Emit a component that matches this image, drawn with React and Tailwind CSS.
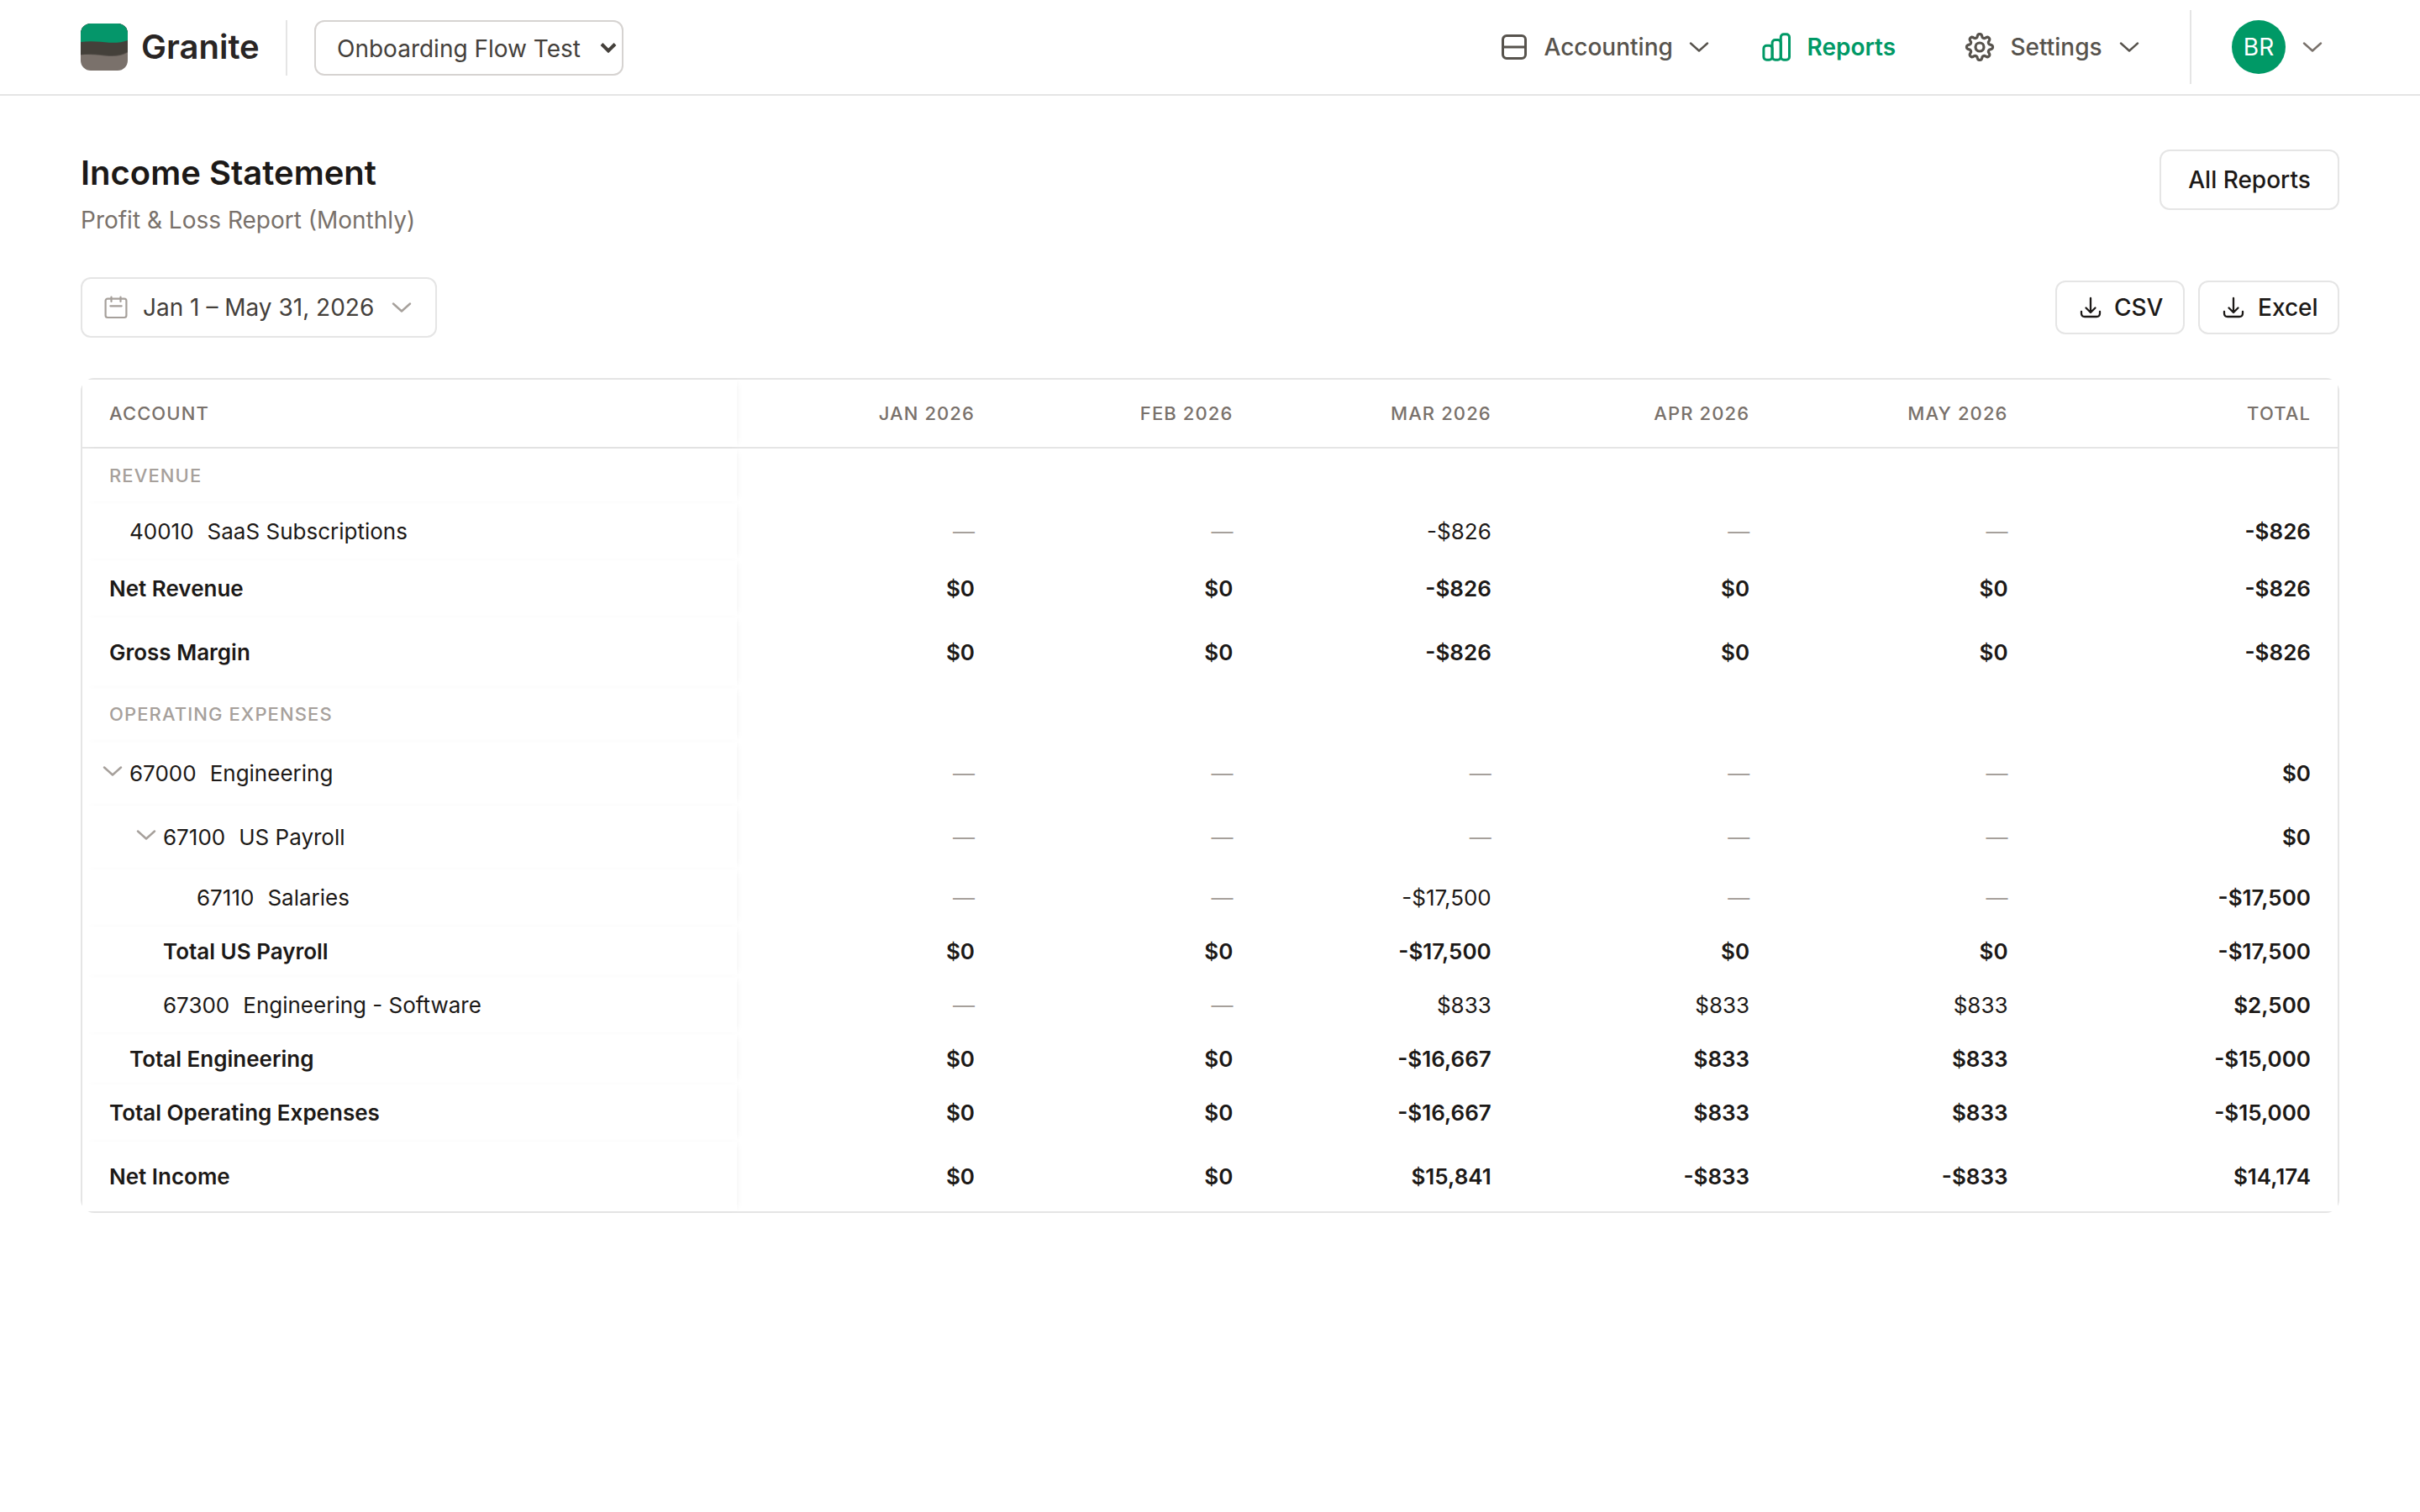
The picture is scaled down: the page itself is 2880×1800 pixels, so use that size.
const F = '"Inter", "Liberation Sans", sans-serif';

const months = ['JAN 2026', 'FEB 2026', 'MAR 2026', 'APR 2026', 'MAY 2026'];
const D = '—';
const Z = '$0';

const rows = [
  { kind: 'section', label: 'REVENUE', h: 'h-16' },
  { kind: 'account', code: '40010', label: 'SaaS Subscriptions', h: 'h-17', pad: 'pl-14', v: [D, D, '-$826', D, D, '-$826'] },
  { kind: 'total', label: 'Net Revenue', h: 'h-17', pad: 'pl-8', v: [Z, Z, '-$826', Z, Z, '-$826'] },
  { kind: 'total', label: 'Gross Margin', h: 'h-21', pad: 'pl-8', v: [Z, Z, '-$826', Z, Z, '-$826'] },
  { kind: 'section', label: 'OPERATING EXPENSES', h: 'h-16' },
  { kind: 'account', code: '67000', label: 'Engineering', open: true, h: 'h-19', pad: 'pl-6', v: [D, D, D, D, D, Z] },
  { kind: 'account', code: '67100', label: 'US Payroll', open: true, h: 'h-19', pad: 'pl-16', v: [D, D, D, D, D, Z] },
  { kind: 'account', code: '67110', label: 'Salaries', h: 'h-17', pad: 'pl-34', v: [D, D, '-$17,500', D, D, '-$17,500'] },
  { kind: 'total', label: 'Total US Payroll', h: 'h-15', pad: 'pl-24', v: [Z, Z, '-$17,500', Z, Z, '-$17,500'] },
  { kind: 'account', code: '67300', label: 'Engineering - Software', h: 'h-17', pad: 'pl-24', v: [D, D, '$833', '$833', '$833', '$2,500'] },
  { kind: 'total', label: 'Total Engineering', h: 'h-15', pad: 'pl-14', v: [Z, Z, '-$16,667', '$833', '$833', '-$15,000'] },
  { kind: 'total', label: 'Total Operating Expenses', h: 'h-17', pad: 'pl-8', v: [Z, Z, '-$16,667', '$833', '$833', '-$15,000'] },
  { kind: 'total', label: 'Net Income', h: 'h-21', pad: 'pl-8', v: [Z, Z, '$15,841', '-$833', '-$833', '$14,174'] },
];

const grid = 'grid grid-cols-[778.6px_repeat(5,307.4px)_1fr]';

function Chevron({ className }) {
  return (
    <svg viewBox="0 0 24 12" className={className} fill="none" stroke="currentColor" strokeWidth="2.4" strokeLinecap="round" strokeLinejoin="round">
      <path d="M2 1.5 L12 10.5 L22 1.5" />
    </svg>
  );
}

function Logo() {
  return (
    <svg viewBox="0 0 56 56" className="size-14 rounded-xl">
      <rect width="56" height="56" fill="#7a716b" />
      <path d="M0 0H56V34.5C50 38 42 39.5 34 39C24 38.400 14 36 0 37.500Z" fill="#57514c" />
      <path d="M0 0H56V33.500C50 37 42 38.500 34 38C24 37.400 14 35 0 37Z" fill="#44403a" />
      <path d="M0 0H56V20C50 22.500 42 23 34 22.700C24 22 14 20.500 0 22Z" fill="#05966a" />
    </svg>
  );
}

function AccountingIcon() {
  return (
    <svg viewBox="0 0 36 36" className="size-9" fill="none" stroke="currentColor" strokeWidth="3" strokeLinejoin="round">
      <rect x="4.500" y="4.500" width="27" height="27" rx="4.500" />
      <path d="M4.500 18H31.500" />
    </svg>
  );
}

function ReportsIcon() {
  return (
    <svg viewBox="0 0 36 36" className="size-9" fill="none" stroke="currentColor" strokeWidth="3" strokeLinejoin="round">
      <rect x="2.900" y="16.200" width="10.200" height="17" rx="3.500" />
      <rect x="13.100" y="9.500" width="10.200" height="23.700" rx="3.500" />
      <rect x="23.300" y="2.800" width="10.200" height="30.400" rx="3.500" />
    </svg>
  );
}

function GearIcon() {
  const n = 8;
  const pts = [];
  for (let i = 0; i < 160; i++) {
    const a = (i / 160) * Math.PI * 2;
    const c = Math.cos(n * (a + Math.PI / 2));
    const r = 13.500 + (2 * Math.tanh(1.500 * c)) / Math.tanh(1.500);
    pts.push((18 + r * Math.cos(a)).toFixed(2) + ',' + (18 + r * Math.sin(a)).toFixed(2));
  }
  return (
    <svg viewBox="0 0 36 36" className="size-9" fill="none" stroke="currentColor" strokeWidth="3.200" strokeLinejoin="round">
      <polygon points={pts.join(' ')} />
      <circle cx="18" cy="18" r="5" />
    </svg>
  );
}

function DownloadIcon() {
  return (
    <svg viewBox="0 0 28 28" className="size-7" fill="none" stroke="currentColor" strokeWidth="2.300" strokeLinecap="round" strokeLinejoin="round">
      <path d="M14 3V19.500M8.500 14.500L14 20L19.500 14.500M3 18.800V21Q3 25 7 25H21Q25 25 25 21V18.800" />
    </svg>
  );
}

function CalendarIcon() {
  return (
    <svg viewBox="0 0 28 28" className="size-7 text-[#a6a09b]" fill="none" stroke="currentColor" strokeWidth="2.200" strokeLinecap="round">
      <rect x="1.600" y="3.600" width="24.800" height="22.400" rx="2.500" />
      <path d="M8.500 1.500V7M19.500 1.500V7M7.300 12.300H20.700" />
    </svg>
  );
}

function Header() {
  return (
    <header className="flex h-[114px] items-center border-b-2 border-[#e5e5e5] bg-white pl-24">
      <Logo />
      <span className="ml-4 w-[138px] whitespace-nowrap text-[40px] leading-none font-semibold text-[#292524]">Granite</span>
      <div className="mt-0.5 ml-[34px] h-[66px] w-0.5 bg-[#e5e5e5]" />
      <div className="mt-0.5 ml-8 flex h-[66px] w-[368px] items-center rounded-xl border-2 border-[#d6d3d1] bg-white pl-[25px] text-[#44403b]">
        <span className="w-[297px] pt-0.5 whitespace-nowrap text-[28px]">Onboarding Flow Test</span>
        <svg viewBox="0 0 20 14" className="ml-4 h-3.5 w-5" fill="none" stroke="currentColor" strokeWidth="4">
          <path d="M2 2.500L10 10.500L18 2.500" />
        </svg>
      </div>
      <nav className="ml-auto flex items-center text-[28px] font-medium text-[#57534d]">
        <div className="flex w-[312px] items-center">
          <AccountingIcon />
          <span className="ml-[17.5px] w-[156.5px] whitespace-nowrap">Accounting</span>
          <Chevron className="ml-4 h-3 w-6" />
        </div>
        <div className="flex w-[242px] items-center text-[#009966]">
          <ReportsIcon />
          <span className="ml-[18.5px] font-semibold">Reports</span>
        </div>
        <div className="flex w-[268px] items-center">
          <GearIcon />
          <span className="ml-[18.5px] w-[113.5px] whitespace-nowrap">Settings</span>
          <Chevron className="ml-4 h-3 w-6" />
        </div>
      </nav>
      <div className="h-[88px] w-0.5 bg-[#e5e5e5]" />
      <div className="ml-12 flex size-16 items-center justify-center rounded-full bg-[#009966] text-[28px] text-white">BR</div>
      <Chevron className="mr-[116px] ml-5 h-3 w-6 text-[#79716b]" />
    </header>
  );
}

function Row({ r }) {
  const section = r.kind === 'section';
  return (
    <div className={`${grid} ${r.h} text-[26px] text-[#1c1917]`}>
      <div className="flex items-center shadow-[4px_0_8px_-4px_rgba(0,0,0,0.06)]">
        {section ? (
          <span className="pl-8 text-[22px] font-medium tracking-[0.05em] text-[#a6a09b]">{r.label}</span>
        ) : (
          <span className={`${r.pad} flex items-center ${r.kind === 'total' ? 'font-semibold' : ''}`}>
            {r.open && <Chevron className="mr-2 mb-1 h-3 w-6 text-[#a6a09b]" />}
            {r.code && <span className="mr-4">{r.code}</span>}
            <span>{r.label}</span>
          </span>
        )}
      </div>
      {!section &&
        r.v.map((t, i) => (
          <div
            key={i}
            className={`flex items-center justify-end ${i === 5 ? 'pr-8' : 'pr-6'} ${t === D ? 'text-[#a6a09b]' : ''} ${i === 5 || r.kind === 'total' ? 'font-semibold' : ''}`}
          >
            {t}
          </div>
        ))}
    </div>
  );
}

export default function App() {
  return (
    <div className="min-h-[1800px] w-[2880px] bg-white text-[#1c1917]" style={{ fontFamily: F }}>
      <Header />
      <main className="flex flex-col px-24 pt-16">
        <div className="flex h-[152px] items-start justify-between">
          <div>
            <h1 className="mt-1 text-[40px] leading-[48px] font-semibold">Income Statement</h1>
            <p className="mt-3 text-[28px] leading-10 text-[#79716b]">Profit &amp; Loss Report (Monthly)</p>
          </div>
          <button className="h-[72px] w-[214px] rounded-xl border-2 border-[#e5e5e5] bg-white text-[28px] font-medium">All Reports</button>
        </div>
        <div className="flex h-[72px] items-center justify-between">
          <button className="flex h-[72px] w-[424px] items-center rounded-xl border-2 border-[#e5e5e5] bg-white pl-[26px] text-[28px] text-[#44403b]">
            <CalendarIcon />
            <span className="ml-[18px] w-[280px] text-left whitespace-nowrap">Jan 1 – May 31, 2026</span>
            <Chevron className="ml-4 h-3 w-6 text-[#a6a09b]" />
          </button>
          <div className="flex gap-4 text-[28px] font-medium">
            <button className="flex h-16 w-[154px] items-center rounded-xl border-2 border-[#e5e5e5] bg-white pl-[26px]">
              <DownloadIcon />
              <span className="ml-3.5">CSV</span>
            </button>
            <button className="flex h-16 w-[168px] items-center rounded-xl border-2 border-[#e5e5e5] bg-white pl-[26px]">
              <DownloadIcon />
              <span className="ml-[15px]">Excel</span>
            </button>
          </div>
        </div>
        <section className="mt-12 overflow-hidden rounded-2xl">
          <div className="border-2 border-[#e5e5e5] bg-white">
            <div className={`${grid} h-[82px] border-b-2 border-[#e5e5e5] text-[22px] font-medium tracking-[0.05em] text-[#79716b]`}>
              <div className="flex items-center pl-8 shadow-[4px_0_8px_-4px_rgba(0,0,0,0.06)]">ACCOUNT</div>
              {months.map((m) => (
                <div key={m} className="flex items-center justify-end pr-6">{m}</div>
              ))}
              <div className="flex items-center justify-end pr-8">TOTAL</div>
            </div>
            {rows.map((r) => (
              <Row key={r.label} r={r} />
            ))}
          </div>
        </section>
      </main>
    </div>
  );
}
